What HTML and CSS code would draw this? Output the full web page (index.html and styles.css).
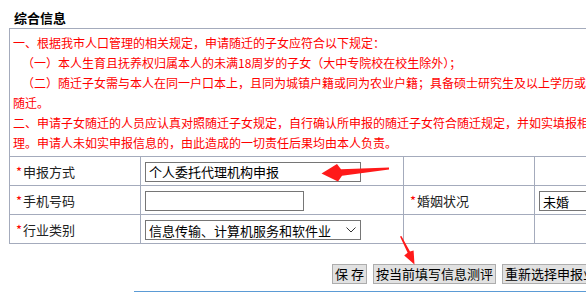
FILE: index.html
```html
<!DOCTYPE html>
<html lang="zh-CN">
<head>
    <meta charset="UTF-8">
    <title>综合信息</title>
    <link rel="stylesheet" href="styles.css">
</head>
<body>
    <div class="page">
        <h3 class="title">综合信息</h3>

        <table class="info">
            <colgroup>
                <col class="col-label">
                <col class="col-field">
                <col class="col-label">
                <col class="col-field">
            </colgroup>
            <tr>
                <td colspan="4" class="notice">
                    <p>一、根据我市人口管理的相关规定，申请随迁的子女应符合以下规定：</p>
                    <p class="sub">（一）本人生育且抚养权归属本人的未满18周岁的子女（大中专院校在校生除外）；</p>
                    <p class="sub">（二）随迁子女需与本人在同一户口本上，且同为城镇户籍或同为农业户籍；具备硕士研究生及以上学历或中级以上职称的，其配偶可<br>随迁。</p>
                    <p>二、申请子女随迁的人员应认真对照随迁子女规定，自行确认所申报的随迁子女符合随迁规定，并如实填报相关信息，按程序办<br>理。申请人未如实申报信息的，由此造成的一切责任后果均由本人负责。</p>
                </td>
            </tr>
            <tr>
                <td class="label"><span class="req">*</span>申报方式</td>
                <td class="field"><input class="text long" type="text" value="个人委托代理机构申报"></td>
                <td class="label"></td>
                <td class="field"></td>
            </tr>
            <tr>
                <td class="label"><span class="req">*</span>手机号码</td>
                <td class="field"><input class="text short" type="text" value=""></td>
                <td class="label"><span class="req">*</span>婚姻状况</td>
                <td class="field">
                    <span class="select-wrap">
                        <select class="choice marital">
                            <option>未婚</option>
                            <option>已婚</option>
                        </select>
                        <svg class="chevron" width="10" height="6" viewBox="0 0 10 6"><path d="M0.5 0.5 L5 5 L9.5 0.5" fill="none" stroke="#333" stroke-width="1"/></svg>
                    </span>
                </td>
            </tr>
            <tr>
                <td class="label"><span class="req">*</span>行业类别</td>
                <td class="field">
                    <span class="select-wrap">
                        <select class="choice long">
                            <option>信息传输、计算机服务和软件业</option>
                        </select>
                        <svg class="chevron" width="10" height="6" viewBox="0 0 10 6"><path d="M0.5 0.5 L5 5 L9.5 0.5" fill="none" stroke="#333" stroke-width="1"/></svg>
                    </span>
                </td>
                <td class="label"></td>
                <td class="field"></td>
            </tr>
        </table>

        <div class="actions">
            <button class="btn">保 存</button>
            <button class="btn">按当前填写信息测评</button>
            <button class="btn">重新选择申报业务</button>
        </div>

        <div class="rule"></div>

        <!-- annotation arrows drawn over the form -->
        <svg class="marks" width="586" height="292" viewBox="0 0 586 292">
            <polygon points="389,167.6 341,169.3 337,164 321.5,173.5 338,181.5 342,175.8 389,169.6" fill="#ff1a1a"/>
            <polygon points="400,236.5 407.6,252.8 404.2,255.6 414.5,264.5 413.6,250.6 410,251.6 401.4,236" fill="#ff1a1a"/>
        </svg>
    </div>
</body>
</html>
```

FILE: styles.css
```css
html, body {
    margin: 0;
    padding: 0;
    overflow: hidden;
    background: #ffffff;
}

body {
    font-family: "Noto Sans CJK SC", "Microsoft YaHei", sans-serif;
    font-size: 13px;
    color: #333333;
}

.page {
    position: relative;
    width: 800px;
    padding-left: 9px;
}

.title {
    margin: 0;
    padding: 8px 0 0 5px;
    font-size: 13px;
    line-height: 20px;
    font-weight: bold;
    color: #000000;
}

.info {
    border-collapse: collapse;
    table-layout: fixed;
    width: 788px;
}

.info td {
    border: 1px solid #a4abbc;
    padding: 0;
}

.col-label {
    width: 131px;
}

.col-field {
    width: 263px;
}

.notice {
    padding: 4px 0 3px 3px !important;
    color: #ff0000;
    font-size: 12px;
    line-height: 20px;
}

.notice p {
    margin: 0;
    white-space: nowrap;
}

.notice .sub {
    text-indent: 9px;
}

.info .label,
.info .field {
    height: 28px;
}

.info .label {
    padding-left: 6px;
    color: #222222;
    font-size: 13px;
}

.info .field {
    padding-left: 4px;
}

.req {
    color: #ff0000;
    margin-right: 1px;
}

.text,
.choice {
    box-sizing: border-box;
    height: 20px;
    margin: 0;
    border: 1px solid #767676;
    border-radius: 0;
    background: #ffffff;
    font-family: inherit;
    font-size: 13px;
    color: #000000;
    vertical-align: middle;
}

.text {
    padding: 0 3px;
}

.long {
    width: 216px;
}

.short {
    width: 159px;
}

.choice {
    -webkit-appearance: none;
    appearance: none;
    padding: 0 20px 0 3px;
}

.marital {
    width: 80px;
}

.select-wrap {
    position: relative;
    display: inline-block;
    vertical-align: middle;
}

.select-wrap .choice {
    display: block;
}

.chevron {
    position: absolute;
    right: 5px;
    top: 7px;
    pointer-events: none;
}

.actions {
    display: flex;
    gap: 6px;
    margin-top: 20px;
    padding-left: 323px;
}

.btn {
    height: 20px;
    padding: 0 2px;
    border: 1px solid #adadad;
    border-radius: 0;
    background: #e1e1e1;
    font-family: inherit;
    font-size: 13px;
    line-height: 18px;
    color: #000000;
    white-space: nowrap;
}

.rule {
    margin: 7px 0 0 125px;
    border-top: 1px solid #5b9bd5;
}

.marks {
    position: absolute;
    top: 0;
    left: 0;
}
```
